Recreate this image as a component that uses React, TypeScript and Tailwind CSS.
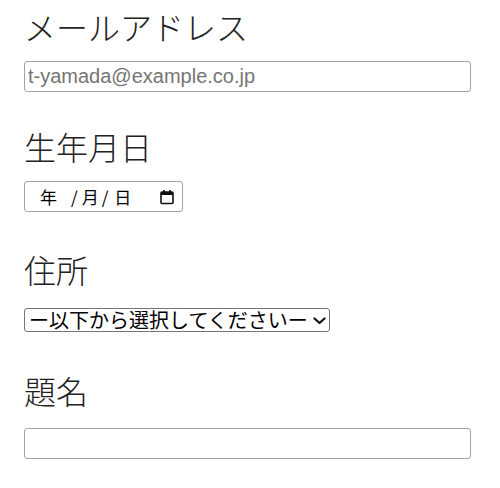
import React from "react";

const jp = { fontFamily: '"Noto Sans CJK JP", "Noto Sans", sans-serif' };
const sans = { fontFamily: '"Liberation Sans", Arial, "Noto Sans CJK JP", sans-serif' };

function Heading({ children, className = "" }: { children: React.ReactNode; className?: string }) {
  return (
    <h2 className={`text-[32px] leading-[40px] font-light text-[#222] ${className}`} style={jp}>
      {children}
    </h2>
  );
}

function CalendarIcon() {
  return (
    <svg width="16" height="16" viewBox="0 0 16 16" fill="none">
      <rect x="2" y="3" width="12" height="11.5" rx="1" stroke="#111" strokeWidth="1.6" />
      <rect x="2" y="3" width="12" height="3" fill="#111" />
      <rect x="4.2" y="1" width="1.6" height="3" fill="#111" />
      <rect x="10.2" y="1" width="1.6" height="3" fill="#111" />
    </svg>
  );
}

export default function App() {
  return (
    <div className="bg-white w-[500px] h-[488px] px-6 pt-[6px] text-black">
      <Heading>メールアドレス</Heading>
      <input
        type="email"
        placeholder="t-yamada@example.co.jp"
        className="mt-[15px] block w-[447px] h-[31px] border border-[#a3a3a3] rounded-[3px] pl-[3px] text-[20px] placeholder:text-[#757575] outline-none"
        style={sans}
      />

      <Heading className="mt-[34px]">生年月日</Heading>
      <div
        className="mt-[15px] flex items-center w-[159px] h-[31px] border border-[#a3a3a3] rounded-[3px] text-[17px] text-black"
        style={jp}
      >
        <span className="ml-[15px]">年</span>
        <span className="ml-[14px]">/</span>
        <span className="ml-[4px]">月</span>
        <span className="ml-[3px]">/</span>
        <span className="ml-[6px]">日</span>
        <span className="ml-auto mr-[7px] flex">
          <CalendarIcon />
        </span>
      </div>

      <Heading className="mt-[37px]">住所</Heading>
      <div className="relative mt-[19px] w-[306px]">
        <select
          className="appearance-none block w-[306px] h-[24px] border border-[#767676] rounded-[3px] pl-[4px] text-[20px] leading-[22px] text-black outline-none"
          style={jp}
          defaultValue=""
        >
          <option value="">ー以下から選択してくださいー</option>
        </select>
        <svg
          className="pointer-events-none absolute right-[4px] top-[9px]"
          width="13"
          height="8"
          viewBox="0 0 13 8"
          fill="none"
        >
          <path d="M1.5 1.5 L6.5 6 L11.5 1.5" stroke="#111" strokeWidth="2.2" strokeLinecap="round" strokeLinejoin="round" />
        </svg>
      </div>

      <Heading className="mt-[38px]">題名</Heading>
      <input
        type="text"
        className="mt-[18px] block w-[447px] h-[31px] border border-[#a3a3a3] rounded-[3px] pl-[3px] text-[20px] outline-none"
        style={sans}
      />
    </div>
  );
}
